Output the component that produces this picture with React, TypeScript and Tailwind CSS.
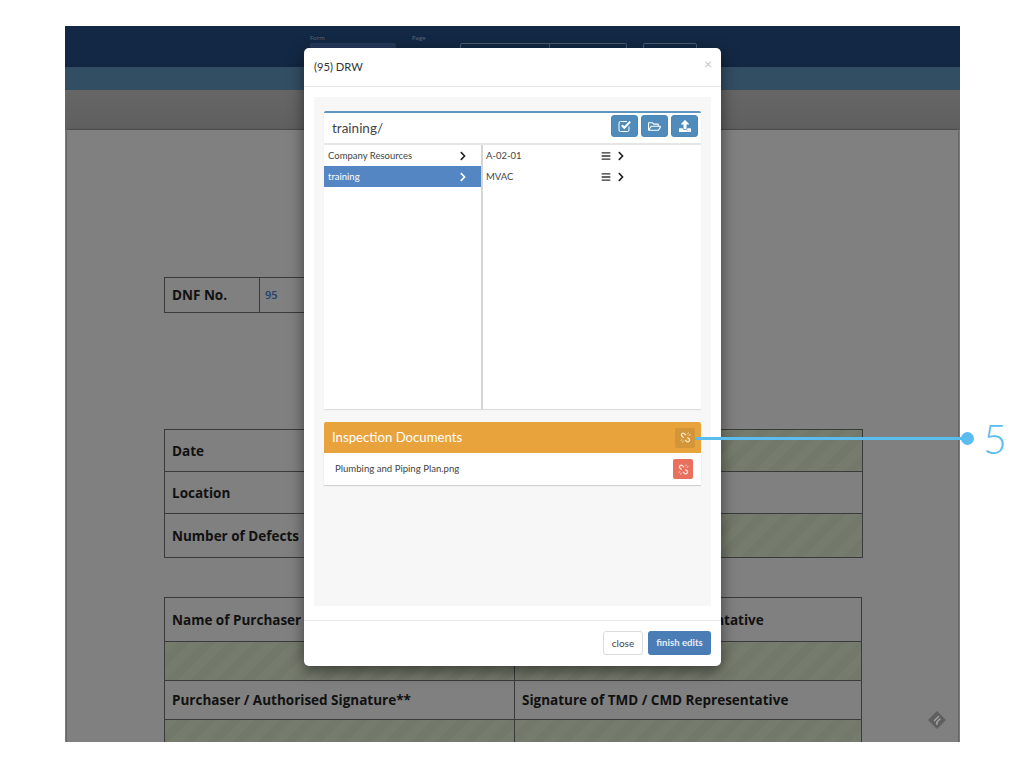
import React from 'react';
import { FaBars, FaChevronRight, FaRegFolderOpen, FaUpload } from 'react-icons/fa';

const hatch =
  'bg-[repeating-linear-gradient(135deg,#767c6d_0,#767c6d_9px,#72786a_9px,#72786a_18px)]';

function FormCell({ label, hatched, className }: { label?: string; hatched?: boolean; className?: string }) {
  return (
    <div
      className={`flex items-center pl-[7px] text-[13.5px] font-bold text-[#111] ${hatched ? hatch : ''} ${className ?? ''}`}
    >
      {label}
    </div>
  );
}

function Background() {
  return (
    <div className="flex h-[716px] w-[895px] flex-col overflow-hidden bg-[#808080]">
      <div className="flex h-[41px] shrink-0 items-start bg-[#132844] pl-[245px] pt-[8px] text-[#5d6b80]">
        <div className="w-[102px]">
          <div className="text-[6px] leading-[8px]">Form</div>
          <div className="mt-[1px] h-[10px] w-[86px] rounded-t-[2px] bg-[#25395a]" />
        </div>
        <div className="w-[48px] text-[6px] leading-[8px]">Page</div>
        <div className="mt-[9px] flex">
          <div className="h-[10px] w-[90px] rounded-tl-[2px] border border-[#4a5a70]" />
          <div className="h-[10px] w-[77px] rounded-tr-[2px] border border-l-0 border-[#4a5a70]" />
          <div className="ml-[16px] h-[10px] w-[54px] rounded-t-[2px] border border-[#4a5a70]" />
        </div>
      </div>
      <div className="h-[23px] shrink-0 bg-[#324e63] shadow-[0_2px_4px_rgba(0,0,0,0.4)]" />
      <div className="h-[40px] shrink-0 bg-[linear-gradient(#666666,#5f5f5f)]" />
      <div className="mx-[2px] flex-1 bg-[#808080] pl-[97px] pt-[147px] shadow-[0_0_2px_rgba(0,0,0,0.6)]">
        <div className="grid h-[36px] w-[300px] grid-cols-[95px_1fr] border border-[#3a3a3a]">
          <FormCell label="DNF No." className="border-r border-[#3a3a3a]" />
          <div className="flex items-center pl-[5px] text-[11px] font-semibold text-[#24406e]">95</div>
        </div>
        <div className="mt-[116px] grid h-[129px] w-[699px] grid-cols-[300px_1fr] grid-rows-[42px_42px_1fr] border border-[#3a3a3a]">
          <FormCell label="Date" className="border-b border-[#3a3a3a] pt-[2px]" />
          <FormCell hatched className="border-b border-[#3a3a3a]" />
          <FormCell label="Location" className="border-b border-[#3a3a3a] pt-[2px]" />
          <FormCell className="border-b border-[#3a3a3a]" />
          <FormCell label="Number of Defects" className="pt-[2px]" />
          <FormCell hatched />
        </div>
        <div className="mt-[39px] grid h-[160px] w-[698px] grid-cols-[350px_1fr] grid-rows-[44px_39px_39px_1fr] border border-[#3a3a3a]">
          <FormCell label="Name of Purchaser" className="border-b border-r border-[#3a3a3a] pt-[2px]" />
          <FormCell label="Name of TMD / CMD Representative" className="border-b border-[#3a3a3a] pt-[2px]" />
          <FormCell hatched className="border-b border-r border-[#3a3a3a]" />
          <FormCell hatched className="border-b border-[#3a3a3a]" />
          <FormCell label="Purchaser / Authorised Signature**" className="border-b border-r border-[#3a3a3a]" />
          <FormCell label="Signature of TMD / CMD Representative" className="border-b border-[#3a3a3a]" />
          <FormCell hatched className="border-r border-[#3a3a3a]" />
          <FormCell hatched />
        </div>
      </div>
    </div>
  );
}

function ToolButton({ children }: { children: React.ReactNode }) {
  return (
    <button className="flex h-[22px] w-[27px] items-center justify-center rounded-[3px] border border-[#4a86b6] bg-[#4f8cbc] text-[13px] text-white">
      {children}
    </button>
  );
}

function CheckBoxIcon() {
  return (
    <svg className="h-[14px] w-[14px]" viewBox="0 0 14 14" fill="none" stroke="white">
      <path d="M11 7.5 V11 A1.5 1.5 0 0 1 9.5 12.5 H2.5 A1.5 1.5 0 0 1 1 11 V4 A1.5 1.5 0 0 1 2.5 2.5 H9" strokeWidth="1" />
      <path d="M3.8 6.2 L6.3 8.8 L12.2 2.6" strokeWidth="2" />
    </svg>
  );
}

// broken chain, runs top left to bottom right
function UnlinkIcon({ className }: { className: string }) {
  return (
    <svg className={`h-[11px] w-[11px] ${className}`} viewBox="0 0 12 12" fill="none" stroke="currentColor" strokeWidth="1.4" strokeLinecap="round">
      <path d="M6.2 3 L4.6 1.7 A1.9 1.9 0 0 0 2 4.4 L3.6 5.8" />
      <path d="M5.8 9 L7.4 10.3 A1.9 1.9 0 0 0 10 7.6 L8.4 6.2" />
      <path d="M8.5 2 L9 1 M10 3.5 L11 3 M3.5 10 L3 11 M2 8.5 L1 9" strokeWidth="1" />
    </svg>
  );
}

function FolderRow({ label, active }: { label: string; active?: boolean }) {
  return (
    <div
      className={`flex h-[21px] items-center justify-between pl-[4px] pr-[13px] pt-[1px] text-[9.5px] ${
        active ? 'bg-[#5586c4] text-white' : 'text-[#444]'
      }`}
    >
      <span>{label}</span>
      <FaChevronRight className={`text-[10px] ${active ? 'text-white' : 'text-[#222]'}`} />
    </div>
  );
}

function FileRow({ label }: { label: string }) {
  return (
    <div className="flex h-[21px] items-center pl-[3px] pt-[1px] text-[9.5px] text-[#444]">
      <span className="w-[115px]">{label}</span>
      <FaBars className="text-[10px] text-[#333]" />
      <FaChevronRight className="ml-[5px] text-[10px] text-[#222]" />
    </div>
  );
}

function Modal() {
  return (
    <div className="absolute left-[304px] top-[48px] flex h-[618px] w-[417px] flex-col rounded-[5px] bg-white font-['Lato',sans-serif] shadow-[0_5px_15px_rgba(0,0,0,0.5)]">
      <div className="relative flex h-[39px] shrink-0 items-center border-b border-[#e8e8e8] pl-[10px] text-[11.2px] text-[#333]">
        (95) DRW
        <span className="absolute right-[9px] top-[8px] text-[14px] leading-[16px] text-[#c4c4c4]">×</span>
      </div>
      <div className="mx-[10px] mt-[10px] h-[509px] shrink-0 bg-[#f7f7f7] px-[10px] pt-[14px]">
        <div className="h-[298px] rounded-t-[2px] border-t-2 border-[#5f95be] bg-white shadow-[0_1px_1px_rgba(0,0,0,0.12)]">
          <div className="flex h-[32px] items-start justify-between border-b-2 border-[#e6e6e6] pl-[8px] pr-[3px] pt-[2px]">
            <span className="text-[13.5px] leading-[26px] text-[#444]">training/</span>
            <div className="flex gap-[3px]">
              <ToolButton>
                <CheckBoxIcon />
              </ToolButton>
              <ToolButton>
                <FaRegFolderOpen />
              </ToolButton>
              <ToolButton>
                <FaUpload className="text-[12px]" />
              </ToolButton>
            </div>
          </div>
          <div className="grid h-[264px] grid-cols-[159px_1fr]">
            <div className="border-r-2 border-[#d5d5d5]">
              <FolderRow label="Company Resources" />
              <FolderRow label="training" active />
            </div>
            <div>
              <FileRow label="A-02-01" />
              <FileRow label="MVAC" />
            </div>
          </div>
        </div>
        <div className="mt-[13px] flex h-[31px] items-center justify-between rounded-t-[2px] bg-[#e8a33d] pl-[8px] pr-[6px] text-[13.2px] text-white">
          <span>Inspection Documents</span>
          <div className="flex h-[20px] w-[20px] items-center justify-center rounded-[2px] bg-[#d3953a]">
            <UnlinkIcon className="text-[#f8e5c4]" />
          </div>
        </div>
        <div className="flex h-[32px] items-center justify-between bg-white pl-[11px] pr-[8px] text-[9.6px] text-[#444] shadow-[0_1px_1px_rgba(0,0,0,0.15)]">
          <span className="pt-[1px]">Plumbing and Piping Plan.png</span>
          <div className="flex h-[20px] w-[20px] items-center justify-center rounded-[2px] bg-[#e8705c]">
            <UnlinkIcon className="text-[#fde3de]" />
          </div>
        </div>
      </div>
      <div className="mt-[14px] flex flex-1 items-start justify-end gap-[5px] border-t border-[#e8e8e8] pr-[10px] pt-[10px]">
        <button className="h-[24px] w-[40px] rounded-[3px] border border-[#dcdcdc] bg-white text-[10px] text-[#444]">
          close
        </button>
        <button className="h-[24px] w-[63px] rounded-[3px] bg-[#4a7cb5] text-[9.6px] font-bold text-[#e6eef7]">
          finish edits
        </button>
      </div>
    </div>
  );
}

export default function App() {
  return (
    <div className="relative h-[768px] w-[1024px] overflow-hidden bg-white pl-[65px] pt-[26px] font-['Open_Sans','Noto_Sans',sans-serif]">
      <Background />
      <svg
        className="absolute left-[928px] top-[711px] h-[18px] w-[18px]"
        viewBox="0 0 18 18"
        fill="none"
      >
        <path d="M9 1 L17 9 L9 17 L1 9 Z" fill="#5f5f5f" stroke="#5f5f5f" strokeWidth="1.5" strokeLinejoin="round" />
        <path d="M10.5 5.5 L6.5 9.5 M12 8 L8.5 11.5 M9.5 12.5 L8.8 13.2" stroke="#a5a5a5" strokeWidth="1.4" strokeLinecap="round" />
      </svg>
      <Modal />
      <div className="absolute left-[695px] top-[437px] h-[3px] w-[272px] bg-[#5bbcf0]" />
      <div className="absolute left-[961px] top-[432px] h-[13px] w-[13px] rounded-full bg-[#5bbcf0]" />
      <div className="absolute left-[983px] top-[413px] font-['Lato',sans-serif] text-[41px] font-light leading-[52px] text-[#5bbcf0]">
        5
      </div>
    </div>
  );
}
